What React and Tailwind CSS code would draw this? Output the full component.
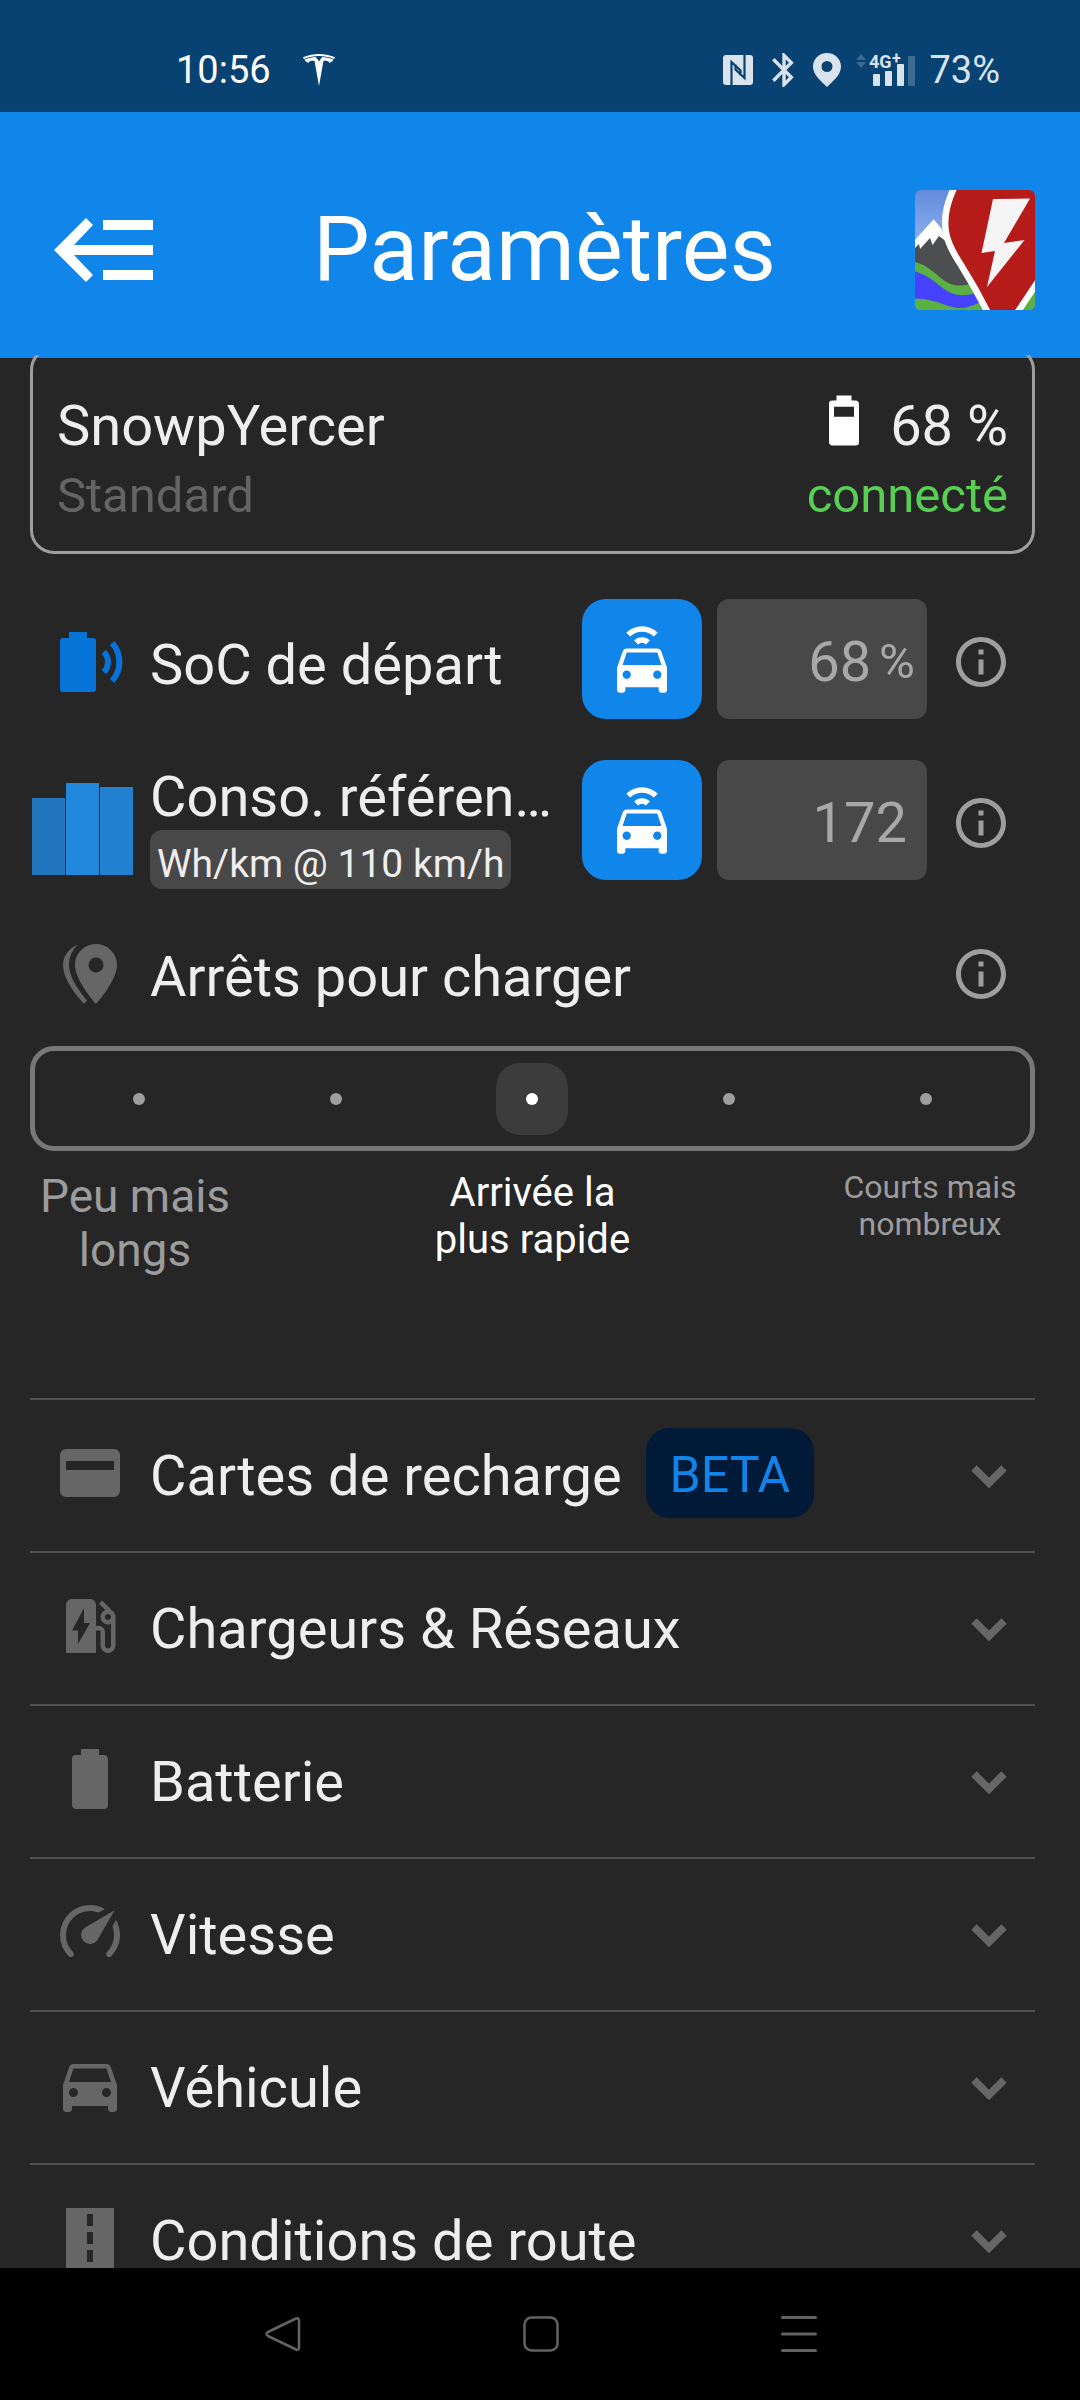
import { useState } from 'react'
import { MdDirectionsCar, MdEvStation, MdInfoOutline } from 'react-icons/md'
import { SiTesla } from 'react-icons/si'

const PATHS = {
  card: 'M4 4h16a2 2 0 0 1 2 2v12a2 2 0 0 1-2 2H4a2 2 0 0 1-2-2V6a2 2 0 0 1 2-2ZM4 8v3h16V8Z',
  battery:
    'M16.67 4H15V2H9v2H7.33A1.33 1.33 0 0 0 6 5.33v15.34C6 21.4 6.6 22 7.33 22h9.34A1.33 1.33 0 0 0 18 20.67V5.33C18 4.6 17.4 4 16.67 4Z',
  speed:
    'M12 16a3 3 0 0 1-3-3c0-1.12.61-2.1 1.5-2.61l9.71-5.62-5.53 9.58C14.18 15.33 13.17 16 12 16M12 3c1.81 0 3.5.5 4.97 1.32l-2.1 1.21C14 5.19 13 5 12 5a8 8 0 0 0-8 8c0 2.21.89 4.21 2.34 5.65h.01c.39.39.39 1.02 0 1.41-.4.39-1.03.39-1.42.01A9.96 9.96 0 0 1 2 13 10 10 0 0 1 12 3M22 13c0 2.76-1.12 5.26-2.93 7.07-.39.38-1.02.38-1.41-.01-.39-.39-.39-1.02 0-1.41A7.98 7.98 0 0 0 20 13c0-1-.19-2-.54-2.9L20.67 8C21.5 9.5 22 11.18 22 13Z',
  road: 'M11 16h2v4h-2zM11 10h2v4h-2zM11 4h2v4h-2zM4 22h16V2H4z',
}

function Glyph({ name }) {
  return (
    <svg viewBox="0 0 24 24" className="size-[72px]" fill="currentColor" aria-hidden="true">
      <path fillRule="evenodd" d={PATHS[name]} />
    </svg>
  )
}

function StatusBar() {
  return (
    <div className="flex h-28 shrink-0 items-center justify-between bg-[#084272] pt-7 pr-20 pl-44 text-[38px] leading-none text-white">
      <div className="flex items-center gap-8">
        <span>10:56</span>
        <SiTesla className="size-8" aria-hidden="true" />
      </div>
      <div className="flex items-center gap-3.5 text-[#d9e3ed]">
        <svg viewBox="0 0 30 30" className="size-[30px]" aria-hidden="true">
          <rect width="30" height="30" rx="3" fill="currentColor" />
          <path d="M8.500 30V7l9 8.500v5M21.500 0v23l-9-8.500v-5" fill="none" stroke="#084272" strokeWidth="2.200" />
        </svg>
        <svg viewBox="2 2 18.800 20" className="h-[34px] w-8" fill="currentColor" aria-hidden="true">
          <path d="M17.710 7.710 12 2h-1v7.590L6.410 5 5 6.410 10.590 12 5 17.590 6.410 19 11 14.410V22h1l5.710-5.710L13.410 12l4.300-4.290zM13 5.830l1.880 1.880L13 9.590V5.830zm1.880 10.460L13 18.170v-3.760l1.880 1.880z" />
        </svg>
        <svg viewBox="0 0 28 34" className="h-[34px] w-7" fill="currentColor" aria-hidden="true">
          <path
            fillRule="evenodd"
            d="M14 0C6 0 0 6 0 13.500 0 22 8 28 14 34c6-6 14-12 14-20.500C28 6 22 0 14 0Zm0 8a5.500 5.500 0 1 1 0 11 5.500 5.500 0 0 1 0-11Z"
          />
        </svg>
        <svg viewBox="0 0 60 34" className="h-[34px] w-[60px] overflow-visible" fill="currentColor">
          <path opacity=".25" d="M6 1l5 6H1zM6 15l5-6H1z" />
          <text x="14" y="15" fontSize="18" fontWeight="700">4G</text>
          <text x="37" y="11" fontSize="16" fontWeight="700">+</text>
          <rect x="18" y="21" width="7" height="12" rx="1" />
          <rect x="30" y="18" width="7" height="15" rx="1" />
          <rect x="42" y="11" width="7" height="22" rx="1" />
          <rect x="53" y="3" width="7" height="30" rx="1" opacity=".25" />
        </svg>
        <span>73%</span>
      </div>
    </div>
  )
}

function AppLogo() {
  return (
    <svg viewBox="0 0 120 120" className="size-[120px] rounded-md" role="img" aria-label="Logo">
      <defs>
        <linearGradient id="sky" x1="0" y1="0" x2="0" y2="1">
          <stop offset="0" stopColor="#628bdc" />
          <stop offset=".5" stopColor="#91b5f2" />
        </linearGradient>
      </defs>
      <rect width="120" height="120" fill="url(#sky)" />
      <path d="M0 52 18.600 31 60 80v30H0Z" fill="#4d4e50" />
      <path d="M0 50 18.600 29.300 26 38l6 14-8-6-6.400 9L15 48 5 59l-1-5-4 4Z" fill="#fff" />
      <path d="M0 72c18 4 27 23 43 23.500 6 0 8-.5 12-1.500l20 26H0Z" fill="#5bb043" />
      <path d="M0 81.500c18 4 29 23 45 23.500 6 0 10-.5 14-1.500l6 8.500c-8 4-13 6-20 6-13 0-22-9-45-9.500Z" fill="#4642ff" />
      <path d="M100 120 120 88v32Z" fill="#5bb043" />
      <path d="M38.500 0C20 36 34 56 46 74c10 16 18 30 26 46h32l22-35V0Z" fill="#b51b19" />
      <path d="M39 -2C21 36 34 57 46 75c10 16 18 30 27 48M102 123l22-33" fill="none" stroke="#fff" strokeWidth="6.500" />
      <path d="m78 9 37-.5L89 53l20.500-3L72 97l8-36-13.500 2Z" fill="#f5f5f5" />
    </svg>
  )
}

function Header() {
  return (
    <header className="grid h-[246px] shrink-0 grid-cols-[1fr_auto_1fr] items-center bg-[#1085ea] pt-[30px] pr-[45px] pl-[54px] text-white">
      <button type="button" aria-label="Retour" className="justify-self-start">
        <svg viewBox="0 0 99 64" className="h-16 w-[99px]" fill="currentColor" aria-hidden="true">
          <path d="M0 32 32 0l7 7-19 20h79v10H20l19 20-7 7ZM49 2h50v10H49ZM49 52h50v10H49Z" />
        </svg>
      </button>
      <h1 className="text-[90px] leading-none">Paramètres</h1>
      <div className="justify-self-end">
        <AppLogo />
      </div>
    </header>
  )
}

function VehicleCard() {
  return (
    <div className="-mt-[9px] rounded-3xl border-[3px] border-[#9e9e9e] px-6 pt-11 pb-[26px]">
      <div className="flex justify-between text-[56px] leading-[66px]">
        <span>SnowpYercer</span>
        <span className="flex items-start gap-4">
          <svg viewBox="0 1 24 24" className="size-[60px] text-white" fill="currentColor" aria-hidden="true">
            <path fillRule="evenodd" d={`${PATHS.battery}M8 6.500v4h8v-4Z`} />
          </svg>
          68 %
        </span>
      </div>
      <div className="mt-2 flex justify-between text-[49px] leading-[58px]">
        <span className="text-[#646464]">Standard</span>
        <span className="text-[#57cf53]">connecté</span>
      </div>
    </div>
  )
}

function InfoButton({ about }) {
  return (
    <button type="button" aria-label={`Info : ${about}`} className="text-[#9e9e9e]">
      <MdInfoOutline className="size-[60px]" />
    </button>
  )
}

function LiveValue({ id, value, unit }) {
  return (
    <div className="mr-6 ml-[15px] flex gap-[15px] pb-1.5">
      <button
        type="button"
        aria-label="Utiliser la valeur du véhicule"
        className="flex size-[120px] items-center justify-center rounded-3xl bg-[#1085ea] text-white"
      >
        <svg viewBox="3 -3 18 24" className="h-[67px] w-[50px]" fill="currentColor" aria-hidden="true">
          <path d="M18.920 6.010C18.720 5.420 18.160 5 17.500 5h-11c-.66 0-1.210.42-1.420 1.010L3 12v8c0 .55.45 1 1 1h1c.55 0 1-.45 1-1v-1h12v1c0 .55.45 1 1 1h1c.55 0 1-.45 1-1v-8l-2.080-5.990zM6.500 16c-.83 0-1.500-.67-1.500-1.500S5.670 13 6.500 13s1.500.67 1.500 1.500S7.330 16 6.500 16zm11 0c-.83 0-1.500-.67-1.500-1.500s.67-1.500 1.500-1.500 1.500.67 1.500 1.500-.67 1.500-1.500 1.500zM5 11l1.500-4.500h11L19 11H5z" />
          <path d="M7.050.05a7 7 0 0 1 9.900 0M9.880 2.880a3 3 0 0 1 4.240 0" fill="none" stroke="currentColor" strokeWidth="2" />
        </svg>
      </button>
      <div
        className={`flex h-[120px] w-[210px] items-center gap-2 rounded-xl bg-[#484848] pt-1.5 text-[56px] text-[#a8a8a8] ${
          unit ? 'pr-3' : 'pr-5'
        }`}
      >
        <input id={id} type="text" defaultValue={value} className="w-full min-w-0 flex-1 bg-transparent text-right outline-none" />
        {unit && <span className="text-[49px]">{unit}</span>}
      </div>
    </div>
  )
}

const STOPS = ['Peu mais longs', 'Peu', 'Arrivée la plus rapide', 'Courts', 'Courts mais nombreux']

function StopSlider() {
  const [stop, setStop] = useState(2)

  return (
    <>
      <div
        role="radiogroup"
        aria-label="Arrêts pour charger"
        className="mt-9 grid h-[105px] grid-cols-5 items-center justify-items-center rounded-3xl border-[5px] border-[#787878] px-1.5"
      >
        {STOPS.map((name, i) => (
          <input
            key={name}
            type="radio"
            name="stops"
            aria-label={name}
            checked={stop === i}
            onChange={() => setStop(i)}
            className="flex size-[72px] appearance-none items-center justify-center rounded-3xl before:size-3 before:rounded-full before:bg-[#9e9e9e] checked:bg-[#3c3c3c] checked:before:bg-white"
          />
        ))}
      </div>
      <div className="mt-[18px] flex items-start justify-between text-center text-[#9c9c9c]">
        <p className="w-[210px] text-[46px] leading-[54px]">Peu mais longs</p>
        <p className="w-[210px] text-[40px] leading-[47px] text-white">Arrivée la plus rapide</p>
        <p className="w-[210px] text-[32px] leading-[37px]">Courts mais nombreux</p>
      </div>
    </>
  )
}

const SECTIONS = [
  { title: 'Cartes de recharge', icon: <Glyph name="card" />, beta: true },
  { title: 'Chargeurs & Réseaux', icon: <MdEvStation className="size-[72px]" /> },
  { title: 'Batterie', icon: <Glyph name="battery" /> },
  { title: 'Vitesse', icon: <Glyph name="speed" /> },
  { title: 'Véhicule', icon: <MdDirectionsCar className="size-[72px]" /> },
  { title: 'Conditions de route', icon: <Glyph name="road" /> },
]

function Section({ title, icon, beta }) {
  return (
    <button
      type="button"
      className="flex h-[153px] w-full shrink-0 items-center border-t-2 border-[#505050] pr-7 pl-6 text-left text-[56px] leading-[66px]"
    >
      <span className="w-24 pb-1.5 text-[#666]">{icon}</span>
      {title}
      {beta && (
        <span className="mb-1.5 ml-6 rounded-3xl bg-[#001a38] px-6 pt-1 text-[50px] leading-[86px] text-[#1283e8]">BETA</span>
      )}
      <svg viewBox="0 0 36 24" className="ml-auto w-9 text-[#666]" fill="none" aria-hidden="true">
        <path d="M3 4 18 19 33 4" stroke="currentColor" strokeWidth="7.500" />
      </svg>
    </button>
  )
}

function SystemNav() {
  return (
    <nav className="grid h-[132px] shrink-0 grid-cols-3 items-center justify-items-center bg-black pr-[152px] pl-[154px] text-[#636363]">
      <button type="button" aria-label="Précédent">
        <svg viewBox="0 0 36 36" className="size-9" fill="none" stroke="currentColor" strokeWidth="2.500" strokeLinejoin="round">
          <path d="M3 16 31 2.500q3-1 3 2v27q0 3-3 2L3 20q-3-2 0-4Z" />
        </svg>
      </button>
      <button type="button" aria-label="Accueil">
        <svg viewBox="0 0 36 36" className="size-9" fill="none" stroke="currentColor" strokeWidth="2.500">
          <rect x="1.500" y="1.500" width="33" height="33" rx="7" />
        </svg>
      </button>
      <button type="button" aria-label="Applications récentes">
        <svg viewBox="0 0 36 36" className="size-9" fill="none" stroke="currentColor" strokeWidth="3" strokeLinecap="round">
          <path d="M1.500 1.500h33M1.500 18h33M1.500 34.500h33" />
        </svg>
      </button>
    </nav>
  )
}

export default function App() {
  return (
    <div className="flex h-screen flex-col bg-[#262626] font-[Roboto,sans-serif] text-[#eee]">
      <StatusBar />
      <Header />

      <main className="-mt-[3px] min-h-0 flex-1 overflow-y-auto pr-[45px] pl-[30px] [scrollbar-width:none]">
        <VehicleCard />

        <div className="mt-[45px] flex h-[126px] items-center pr-6 text-[56px] leading-[66px]">
          <svg viewBox="0 0 24 24" className="mr-6 ml-6 size-[72px] shrink-0 text-[#0673d8]" fill="currentColor" aria-hidden="true">
            <path d="M11 4V2H5v2H3a1 1 0 0 0-1 1v16a1 1 0 0 0 1 1h10a1 1 0 0 0 1-1V5a1 1 0 0 0-1-1Z" />
            <path d="M16.600 8.600a4.800 4.800 0 0 1 0 6.800M19.400 5.700a9.500 9.500 0 0 1 0 12.600" fill="none" stroke="currentColor" strokeWidth="2" />
          </svg>
          <label htmlFor="soc" className="min-w-0 flex-1 truncate pt-1.5">
            SoC de départ
          </label>
          <LiveValue id="soc" value="68" unit="%" />
          <InfoButton about="SoC de départ" />
        </div>

        <div className="mt-[35px] flex h-[126px] items-center pr-6 text-[56px] leading-[66px]">
          <svg viewBox="0 0 104 106" className="mr-4 h-[106px] w-[104px] shrink-0" aria-hidden="true">
            <path d="M2 28h33v77H2z" fill="#2176bd" />
            <path d="M36 13h33v92H36z" fill="#2188dc" />
            <path d="M70 17h33v88H70z" fill="#2181d0" />
          </svg>
          <div className="min-w-0 flex-1 pt-1.5">
            <label htmlFor="conso" className="block truncate">
              Conso. référence
            </label>
            <span className="block w-fit rounded-xl bg-[#484848] px-[7px] pt-2.5 text-[39px] leading-[49px]">Wh/km @ 110 km/h</span>
          </div>
          <LiveValue id="conso" value="172" />
          <InfoButton about="Conso. référence" />
        </div>

        <div className="mt-[52px] flex h-[72px] items-center pr-6 text-[56px] leading-[66px]">
          <svg viewBox="0 0 24 24" className="mr-6 ml-6 size-[72px] shrink-0 text-[#666]" fill="currentColor" aria-hidden="true">
            <path d="M14 2c-3.870 0-7 3.130-7 7 0 5.250 7 13 7 13s7-7.750 7-13c0-3.870-3.130-7-7-7zm0 9.500a2.500 2.500 0 0 1 0-5 2.500 2.500 0 0 1 0 5z" />
            <path d="M7.900 2.300C5 3.300 3 5.900 3 9c0 5 5 10.800 7 12.900l1-1.100C8.700 18 5 13.300 5 9c0-2.700 1-5 2.900-6.700Z" />
          </svg>
          <h2 className="flex-1 pt-1.5">Arrêts pour charger</h2>
          <InfoButton about="Arrêts pour charger" />
        </div>

        <StopSlider />

        <div className="mt-[121px]">
          {SECTIONS.map((section) => (
            <Section key={section.title} {...section} />
          ))}
        </div>
      </main>

      <SystemNav />
    </div>
  )
}
